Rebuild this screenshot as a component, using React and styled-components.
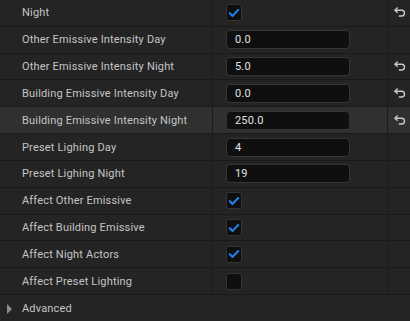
import React from 'react';
import styled, { createGlobalStyle } from 'styled-components';

const Global = createGlobalStyle`
  html, body {
    margin: 0;
    padding: 0;
    background: #242424;
  }
  body {
    font-family: Roboto, "Noto Sans", sans-serif;
  }
`;

const Panel = styled.div`
  width: 410px;
  height: 321px;
  overflow: hidden;
  background: #242424;
  display: flex;
  flex-direction: column;
`;

const Row = styled.div`
  display: grid;
  grid-template-columns: 213px 175px 22px;
  height: 27px;
  box-sizing: border-box;
  border-bottom: 1px solid #1a1a1a;
  background: ${({ $active }) => ($active ? '#303030' : '#242424')};
`;

const NameCell = styled.div`
  display: flex;
  align-items: center;
  padding-left: 22px;
  border-right: 1px solid #1a1a1a;
  font-size: 11px;
  letter-spacing: 0.18px;
  color: #c4c4c4;
  white-space: nowrap;
`;

const ValueCell = styled.div`
  display: flex;
  align-items: center;
  padding-left: 13px;
  border-right: 1px solid #1a1a1a;
`;

const ResetCell = styled.div`
  display: flex;
  align-items: center;
  justify-content: center;
  padding-left: 1px;
`;

const NumberBox = styled.div`
  width: 124px;
  height: 19px;
  box-sizing: border-box;
  background: #0f0f0f;
  border: 1px solid #353535;
  border-radius: 4px;
  display: flex;
  align-items: center;
  padding-left: 8px;
  font-size: 11px;
  letter-spacing: 0.18px;
  color: #e2e2e2;
`;

const Check = styled.div`
  width: 16px;
  height: 17px;
  box-sizing: border-box;
  background: #0f0f0f;
  border: 1px solid #333;
  border-radius: 2px;
  display: flex;
  align-items: center;
  justify-content: center;
`;

const Footer = styled.div`
  display: flex;
  align-items: center;
  height: 25px;
  padding: 1px 0 0 7px;
  gap: 10px;
  font-size: 11px;
  letter-spacing: 0.18px;
  color: #c4c4c4;
`;

const Caret = styled.span`
  width: 0;
  height: 0;
  border-top: 5px solid transparent;
  border-bottom: 5px solid transparent;
  border-left: 5px solid #8c8c8c;
`;

const Tick = () => (
  <svg width="12" height="12" viewBox="0 0 12 12">
    <path d="M1.8 6.2 L4.6 8.9 L10.2 3" fill="none" stroke="#1f80f0" strokeWidth="2.1" strokeLinecap="round" strokeLinejoin="round" />
  </svg>
);

const ResetIcon = () => (
  <svg width="13" height="11" viewBox="0 0 13 11">
    <path d="M2 3.2 H8.6 A2.9 2.9 0 0 1 8.6 9 H5.8" fill="none" stroke="#c8c8c8" strokeWidth="1.4" />
    <path d="M4.7 0.6 L1.9 3.2 L4.7 5.8" fill="none" stroke="#c8c8c8" strokeWidth="1.4" />
  </svg>
);

const rows = [
  { name: 'Night', check: true, reset: true },
  { name: 'Other Emissive Intensity Day', value: '0.0' },
  { name: 'Other Emissive Intensity Night', value: '5.0', reset: true },
  { name: 'Building Emissive Intensity Day', value: '0.0', reset: true },
  { name: 'Building Emissive Intensity Night', value: '250.0', reset: true, active: true },
  { name: 'Preset Lighing Day', value: '4' },
  { name: 'Preset Lighing Night', value: '19' },
  { name: 'Affect Other Emissive', check: true },
  { name: 'Affect Building Emissive', check: true },
  { name: 'Affect Night Actors', check: true },
  { name: 'Affect Preset Lighting', check: false },
];

export default function App() {
  return (
    <>
      <Global />
      <Panel>
        {rows.map((r) => (
          <Row key={r.name} $active={r.active}>
            <NameCell>{r.name}</NameCell>
            <ValueCell>
              {r.value !== undefined ? (
                <NumberBox>{r.value}</NumberBox>
              ) : (
                <Check>{r.check && <Tick />}</Check>
              )}
            </ValueCell>
            <ResetCell>{r.reset && <ResetIcon />}</ResetCell>
          </Row>
        ))}
        <Footer>
          <Caret />
          Advanced
        </Footer>
      </Panel>
    </>
  );
}
